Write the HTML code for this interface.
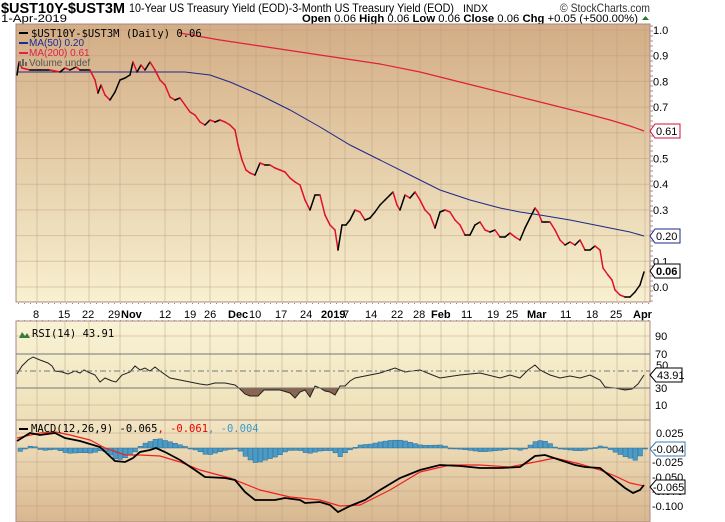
<!DOCTYPE html>
<html><head><meta charset="utf-8">
<style>
html,body{margin:0;padding:0;background:#fff;width:725px;height:522px;overflow:hidden}
svg{display:block;font-family:"Liberation Sans",sans-serif}
</style></head><body>
<svg id="s" width="725" height="522" xmlns="http://www.w3.org/2000/svg">
<defs>
<linearGradient id="g1" x1="0" y1="0" x2="0" y2="1"><stop offset="0" stop-color="#d3ad85"/><stop offset="1" stop-color="#f8f0cf"/></linearGradient>
<linearGradient id="g2" x1="0" y1="0" x2="0" y2="1"><stop offset="0" stop-color="#f9f3d5"/><stop offset="1" stop-color="#ede0b8"/></linearGradient>
<linearGradient id="g3" x1="0" y1="0" x2="0" y2="1"><stop offset="0" stop-color="#f3e6c3"/><stop offset="1" stop-color="#d8b78f"/></linearGradient>
</defs>
<text x="1" y="13" font-size="15" font-weight="bold" fill="#000" textLength="124" lengthAdjust="spacingAndGlyphs">$UST10Y-$UST3M</text>
<text x="129" y="12" font-size="12" fill="#000" textLength="325" lengthAdjust="spacingAndGlyphs">10-Year US Treasury Yield (EOD)-3-Month US Treasury Yield (EOD)</text>
<text x="463" y="12" font-size="11" fill="#000" textLength="25" lengthAdjust="spacingAndGlyphs">INDX</text>
<text x="560" y="12" font-size="12" fill="#333" textLength="90" lengthAdjust="spacingAndGlyphs">© StockCharts.com</text>
<text x="1" y="22" font-size="11" fill="#000" textLength="66" lengthAdjust="spacingAndGlyphs">1-Apr-2019</text>
<text x="302" y="22" font-size="11" fill="#000" textLength="336" lengthAdjust="spacingAndGlyphs"><tspan font-weight="bold">Open</tspan> 0.06 <tspan font-weight="bold"> High</tspan> 0.06 <tspan font-weight="bold"> Low</tspan> 0.06 <tspan font-weight="bold"> Close</tspan> 0.06 <tspan font-weight="bold"> Chg</tspan> +0.05 (+500.00%)</text>
<polygon points="642,20 649,20 645.5,16" fill="#2a7a2a"/>
<rect x="16" y="24" width="634" height="278" fill="url(#g1)" stroke="#a88" stroke-width="1"/>
<rect x="16" y="321" width="634" height="99" fill="url(#g2)" stroke="#a88"/>
<rect x="16" y="420" width="634" height="102" fill="url(#g3)" stroke="#a88"/>
<g id="grid" stroke="#b89c80" stroke-opacity="0.45" stroke-width="1"></g>
<g id="lines"></g>
<g font-size="11" fill="#000" id="axis"></g>
<g font-size="11" id="dates"></g>
<g font-size="11" fill="#000">
<line x1="19" y1="33" x2="28" y2="33" stroke="#000" stroke-width="2"/><text x="31" y="37" font-family="DejaVu Sans Mono,monospace" font-size="10.5">$UST10Y-$UST3M (Daily) 0.06</text>
<line x1="19" y1="43" x2="28" y2="43" stroke="#1a2a9a" stroke-width="2"/><text x="29" y="46" font-size="10" fill="#1a2a9a">MA(50) 0.20</text>
<line x1="19" y1="53" x2="28" y2="53" stroke="#e0204a" stroke-width="2"/><text x="29" y="56" font-size="10" fill="#e0204a">MA(200) 0.61</text>
<rect x="19" y="61" width="2" height="5" fill="#666"/><rect x="22" y="59" width="2" height="7" fill="#666"/><rect x="25" y="62" width="2" height="4" fill="#666"/>
<text x="29" y="66" font-size="10" fill="#555">Volume undef</text>
<polygon points="19,338 22,332 25,336 27,333 30,338" fill="#3a7a3a"/><text x="32" y="337" font-family="DejaVu Sans Mono,monospace" font-size="10.5">RSI(14) 43.91</text>
<line x1="19" y1="429" x2="28" y2="429" stroke="#000" stroke-width="2"/><text x="31" y="432" font-family="DejaVu Sans Mono,monospace" font-size="10.5">MACD(12,26,9) -0.065<tspan fill="#e00">, -0.061</tspan><tspan fill="#3a9ad0">, -0.004</tspan></text>
</g>
</svg>
<script>
const S=document.getElementById('s'),NS='http://www.w3.org/2000/svg';
function el(t,a,p){const e=document.createElementNS(NS,t);for(const k in a)e.setAttribute(k,a[k]);(p||S).appendChild(e);return e}
const G=document.getElementById('grid'),L=document.getElementById('lines');
const vx=[37,65,89,120,165,191,210,238,256,282,307,330,345,372,398,420,441,468,494,510,540,567,593,617,645];
vx.forEach(x=>{[[24,302],[321,420],[420,522]].forEach(r=>el('line',{x1:x,y1:r[0],x2:x,y2:r[1]},G))});
for(let k=0;k<=11;k++){const y=30+25.7*k;if(y<302)el('line',{x1:16,y1:y,x2:650,y2:y},G)}
[336,405].forEach(y=>el('line',{x1:16,y1:y,x2:650,y2:y},G));
[433,462,477,491,506].forEach(y=>el('line',{x1:16,y1:y,x2:650,y2:y},G));
el('line',{x1:16,y1:354,x2:650,y2:354,stroke:'#777'});el('line',{x1:16,y1:388,x2:650,y2:388,stroke:'#777'});
el('line',{x1:16,y1:371,x2:650,y2:371,stroke:'#777','stroke-dasharray':'6,3,2,3'});
const A=document.getElementById('axis');
function tx(x,y,s,a,p){const t=el('text',Object.assign({x:x,y:y},a||{}),p||A);t.textContent=s;return t}
[1.0,0.9,0.8,0.7,0.6,0.5,0.4,0.3,0.2,0.1,0.0].forEach((v,i)=>{if(v==0.6||v==0.2)return;tx(653,30+25.7*i+4,v.toFixed(1))});
for(let y=26;y<302;y+=5)el('line',{x1:650,y1:y,x2:653,y2:y,stroke:'#a88'},A);
[[90,336],[70,354],[30,388],[10,405]].forEach(a=>tx(655,a[1]+4,a[0]));
tx(656,369,'50',{});
[['0.025',433],['-0.025',462],['-0.050',477],['-0.075',491],['-0.100',506]].forEach(a=>tx(a[0][0]=='-'?652:656,a[1]+4,a[0]));
function tag(y,s,c,b){el('polygon',{points:`650,${y} 655,${y-7} 680,${y-7} 680,${y+7} 655,${y+7}`,fill:'#fff',stroke:c},A);tx(656,y+4,s,{fill:'#000','font-weight':b?'bold':'normal'})}
tag(131,'0.61','#d0103a');tag(236,'0.20','#1a2a8a');tag(271,'0.06','#000',1);
el('polygon',{points:`650,375 656,368 682,368 682,382 656,382`,fill:'#fff',stroke:'#000'},A);tx(657,379,'43.91');
el('polygon',{points:`650,449 656,442 685,442 685,456 656,456`,fill:'#fff',stroke:'#3a7ab0'},A);tx(653,453,'-0.004');
el('polygon',{points:`650,487 656,480 685,480 685,494 656,494`,fill:'#fff',stroke:'#000'},A);tx(653,491,'-0.065');
const D=document.getElementById('dates');
[['8',33],['15',58],['22',82],['29',108],['Nov',121,1],['12',159],['19',184],['26',204],['Dec',228,1],['10',249],['17',275],['24',300],['2019',321,1],['7',343],['14',365],['22',391],['28',413],['Feb',431,1],['11',461],['19',487],['25',506],['Mar',527,1],['11',560],['18',586],['25',610],['Apr',633,1]].forEach(d=>tx(d[1],318,d[0],{'font-weight':d[2]?'bold':'normal'},D));
for(let x=18;x<650;x+=6){el('rect',{x:x,y:303,width:1,height:1,fill:'#a88'});el('rect',{x:x,y:320,width:1,height:1,fill:'#a88'})}
function pl(p,c,w){el('polyline',{points:p.map(a=>a.join(',')).join(' '),fill:'none',stroke:c,'stroke-width':w||1},L)}
pl([[180,33],[220,40],[260,46],[300,52],[340,58],[380,64],[420,72],[460,82],[500,92],[540,102],[580,112],[610,120],[630,126],[644,131]],'#e0203a',1.2);
pl([[17,72],[130,72],[160,72],[185,72],[210,75],[230,82],[260,95],[290,110],[320,127],[350,145],[380,160],[410,175],[440,190],[470,200],[500,208],[520,212],[540,215],[570,220],[600,226],[630,232],[644,236]],'#1a2a8a',1);
const P=[[17,75],[19,62],[22,68],[30,70],[40,70],[50,70],[60,72],[65,68],[70,70],[76,67],[80,70],[90,70],[95,80],[98,93],[101,85],[105,95],[110,100],[115,92],[120,80],[125,78],[130,75],[133,62],[137,72],[141,65],[145,70],[150,62],[155,70],[160,80],[165,85],[170,97],[175,100],[180,98],[185,105],[190,112],[195,115],[200,122],[205,125],[210,120],[215,122],[220,120],[225,122],[230,125],[235,130],[238,145],[242,160],[246,170],[250,173],[255,175],[260,163],[265,165],[270,165],[275,168],[280,170],[285,172],[290,178],[295,182],[300,185],[305,200],[310,210],[315,195],[320,195],[325,215],[330,225],[335,230],[338,250],[342,225],[346,225],[350,220],[355,210],[360,212],[365,220],[370,218],[375,212],[380,205],[385,200],[390,195],[393,192],[397,205],[400,210],[405,195],[410,198],[415,192],[420,200],[425,210],[430,215],[435,228],[440,212],[445,210],[450,212],[455,220],[460,225],[465,235],[470,235],[475,225],[480,222],[485,230],[490,232],[495,230],[500,237],[505,237],[510,233],[515,237],[520,240],[525,228],[530,218],[535,208],[538,212],[542,222],[545,222],[550,222],[555,230],[560,240],[565,245],[570,242],[575,245],[580,240],[585,250],[590,250],[595,246],[600,250],[603,268],[608,275],[612,280],[615,290],[620,295],[625,297],[630,297],[635,292],[640,285],[644,272]];
for(let i=1;i<P.length;i++)el('line',{x1:P[i-1][0],y1:P[i-1][1],x2:P[i][0],y2:P[i][1],stroke:P[i][1]>P[i-1][1]?'#e0102a':'#000','stroke-width':1.5,'stroke-linecap':'round'},L);
const R=[[17,374],[22,366],[28,360],[33,357],[40,360],[48,363],[52,366],[55,371],[62,372],[68,374],[75,371],[80,373],[84,370],[88,372],[95,375],[100,382],[105,378],[112,381],[116,382],[122,375],[130,372],[135,366],[140,370],[145,368],[150,371],[155,367],[160,371],[170,378],[180,380],[190,382],[200,384],[207,385],[215,383],[225,383],[235,385],[240,389],[245,394],[250,396],[258,396],[264,390],[280,390],[290,393],[295,398],[300,392],[305,390],[310,397],[315,386],[320,388],[325,391],[330,392],[335,395],[340,386],[345,386],[350,381],[355,378],[380,373],[395,368],[405,372],[420,370],[440,378],[460,375],[480,373],[500,378],[510,375],[520,378],[528,370],[535,365],[540,370],[550,375],[560,378],[570,376],[580,378],[590,375],[600,380],[605,387],[615,388],[625,390],[632,389],[638,384],[644,375]];
el('polygon',{points:R.map(a=>a[0]+','+Math.max(a[1],388)).join(' ')+' 644,388 17,388',fill:'#8a6650'},L);
pl(R,'#222',1);
const M=[[17,441],[30,433],[40,435],[55,433],[65,438],[80,441],[100,447],[115,461],[125,462],[133,458],[140,452],[150,450],[156,448],[165,452],[180,460],[195,470],[205,477],[225,478],[235,480],[245,492],[255,500],[275,500],[285,498],[300,500],[305,503],[320,502],[330,505],[338,512],[350,506],[365,500],[380,490],[400,478],[420,470],[440,465],[460,466],[480,468],[500,468],[520,467],[535,456],[545,455],[560,460],[575,465],[585,467],[600,468],[615,480],[625,488],[633,493],[640,490],[644,485]];
const Sg=[[17,438],[40,433],[56,432],[70,435],[90,440],[105,448],[125,455],[140,455],[160,456],[180,462],[200,470],[230,478],[260,490],[290,497],[320,500],[340,506],[360,505],[390,490],[420,472],[450,465],[480,465],[510,467],[530,463],[555,458],[580,464],[600,470],[615,476],[630,483],[644,486]];
function at(a,x){for(let i=1;i<a.length;i++)if(x<=a[i][0]){const t=(x-a[i-1][0])/(a[i][0]-a[i-1][0]);return a[i-1][1]+t*(a[i][1]-a[i-1][1])}return a[a.length-1][1]}
for(let x=18;x<644;x+=5){const h=(at(Sg,x)-at(M,x))*1.3;const y=h>0?448-h:448;el('rect',{x:x,y:y,width:4.5,height:Math.max(Math.abs(h),1),fill:'#4a9cc8',stroke:'#2a6a98','stroke-width':0.5},L)}
pl(Sg,'#f02020',1.2);pl(M,'#000',1.8);
</script>
</body></html>
